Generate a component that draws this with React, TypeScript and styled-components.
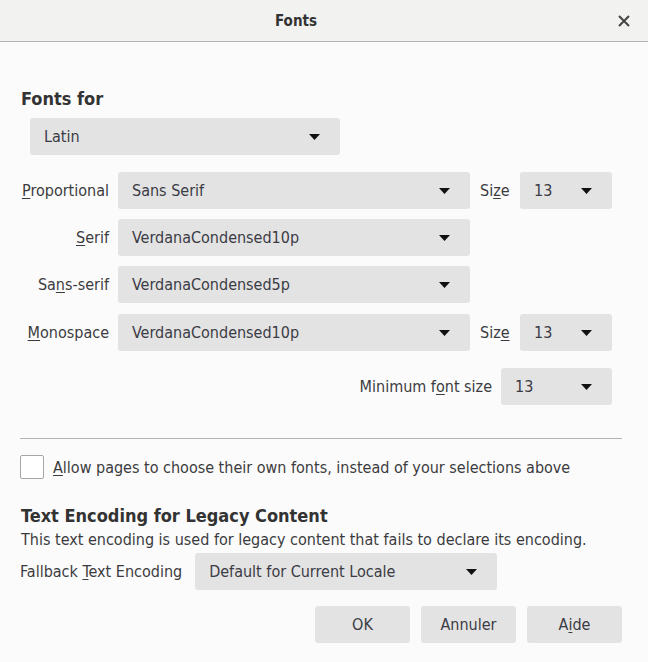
import React from 'react';
import styled, { createGlobalStyle } from 'styled-components';

const GlobalStyle = createGlobalStyle`
  body {
    margin: 0;
    background: #fbfbfb;
    font-family: "DejaVu Sans Condensed", "DejaVu Sans", Verdana, sans-serif;
    font-stretch: condensed;
    color: #3b3b3f;
  }
`;

const Dialog = styled.div`
  width: 648px;
  height: 662px;
  display: flex;
  flex-direction: column;
  background: #fbfbfb;
`;

const Header = styled.div`
  height: 41px;
  display: flex;
  align-items: center;
  background: #f2f2f1;
  border-bottom: 1px solid #b3b3b3;
`;

const Title = styled.div`
  flex: 1;
  text-align: center;
  font-size: 15px;
  font-weight: bold;
  color: #333;
  padding-right: 8px;
`;

const CloseButton = styled.div`
  width: 48px;
  display: flex;
  justify-content: center;
  align-items: center;
  svg {
    display: block;
  }
`;

const Body = styled.div`
  padding: 0 26px 0 20px;
  display: flex;
  flex-direction: column;
`;

const Heading = styled.div<{ $top: number }>`
  font-size: 18px;
  font-weight: bold;
  margin-top: ${(p) => p.$top}px;
  padding-left: 1px;
  line-height: 22px;
  color: #333;
`;

const Row = styled.div<{ $top: number }>`
  display: flex;
  align-items: center;
  margin-top: ${(p) => p.$top}px;
`;

const Label = styled.label<{ $width?: number }>`
  font-size: 16px;
  width: ${(p) => (p.$width ? `${p.$width}px` : 'auto')};
  text-align: right;
  margin-right: 9px;
  white-space: nowrap;
`;

const Key = styled.span`
  text-decoration: underline;
  text-underline-offset: 2px;
`;

const Select = styled.div<{ $width: number; $pad?: number }>`
  width: ${(p) => p.$width}px;
  height: 37px;
  box-sizing: border-box;
  background: #e3e3e3;
  border-radius: 3px;
  display: flex;
  align-items: center;
  justify-content: space-between;
  padding: 0 20px 0 ${(p) => p.$pad ?? 14}px;
  font-size: 16px;
  color: #3b3b45;
`;

const Arrow = () => (
  <svg width="11" height="6" viewBox="0 0 11 6">
    <path d="M0 0 L11 0 L5.5 6 Z" fill="#111" />
  </svg>
);

const SizeLabel = styled.span`
  font-size: 16px;
  width: 30px;
  margin: 0 10px 0 10px;
  white-space: nowrap;
`;

const Separator = styled.hr`
  border: none;
  border-top: 1px solid #b3b3b3;
  margin: 33px 0 0 0;
  width: 602px;
`;

const CheckRow = styled.div`
  display: flex;
  align-items: center;
  margin-top: 16px;
`;

const Checkbox = styled.div`
  width: 22px;
  height: 22px;
  border: 1px solid #a6a6a6;
  border-radius: 2px;
  background: #fff;
  margin-right: 9px;
`;

const Description = styled.div`
  font-size: 16px;
  line-height: 20px;
  margin-top: 3px;
  padding-left: 1px;
`;

const Buttons = styled.div`
  display: flex;
  justify-content: flex-end;
  gap: 11px;
  margin-top: 16px;
`;

const Button = styled.div`
  width: 95px;
  height: 37px;
  background: #e3e3e3;
  border-radius: 3px;
  display: flex;
  align-items: center;
  justify-content: center;
  font-size: 16px;
  color: #3b3b45;
`;

export default function App() {
  return (
    <Dialog>
      <GlobalStyle />
      <Header>
        <Title>Fonts</Title>
        <CloseButton>
          <svg width="12" height="12" viewBox="0 0 12 12">
            <path d="M1 1 L11 11 M11 1 L1 11" stroke="#444" strokeWidth="2" />
          </svg>
        </CloseButton>
      </Header>
      <Body>
        <Heading $top={46}>Fonts for</Heading>
        <Row $top={8} style={{ paddingLeft: 10 }}>
          <Select $width={310}>
            Latin <Arrow />
          </Select>
        </Row>
        <Row $top={17}>
          <Label $width={89}>
            <Key>P</Key>roportional
          </Label>
          <Select $width={352}>
            Sans Serif <Arrow />
          </Select>
          <SizeLabel>
            Si<Key>z</Key>e
          </SizeLabel>
          <Select $width={92} $pad={14}>
            13 <Arrow />
          </Select>
        </Row>
        <Row $top={10}>
          <Label $width={89}>
            <Key>S</Key>erif
          </Label>
          <Select $width={352}>
            VerdanaCondensed10p <Arrow />
          </Select>
        </Row>
        <Row $top={10}>
          <Label $width={89}>
            Sa<Key>n</Key>s-serif
          </Label>
          <Select $width={352}>
            VerdanaCondensed5p <Arrow />
          </Select>
        </Row>
        <Row $top={11}>
          <Label $width={89}>
            <Key>M</Key>onospace
          </Label>
          <Select $width={352}>
            VerdanaCondensed10p <Arrow />
          </Select>
          <SizeLabel>
            Siz<Key>e</Key>
          </SizeLabel>
          <Select $width={92}>
            13 <Arrow />
          </Select>
        </Row>
        <Row $top={17} style={{ justifyContent: 'flex-end', paddingRight: 10 }}>
          <Label>
            Minimum f<Key>o</Key>nt size
          </Label>
          <Select $width={111} $pad={14}>
            13 <Arrow />
          </Select>
        </Row>
        <Separator />
        <CheckRow>
          <Checkbox />
          <Label>
            <Key>A</Key>llow pages to choose their own fonts, instead of your selections above
          </Label>
        </CheckRow>
        <Heading $top={26}>Text Encoding for Legacy Content</Heading>
        <Description>This text encoding is used for legacy content that fails to declare its encoding.</Description>
        <Row $top={3}>
          <Label style={{ marginRight: 13 }}>
            Fallback <Key>T</Key>ext Encoding
          </Label>
          <Select $width={302}>
            Default for Current Locale <Arrow />
          </Select>
        </Row>
        <Buttons>
          <Button>OK</Button>
          <Button>Annuler</Button>
          <Button>
            A<Key>i</Key>de
          </Button>
        </Buttons>
      </Body>
    </Dialog>
  );
}
